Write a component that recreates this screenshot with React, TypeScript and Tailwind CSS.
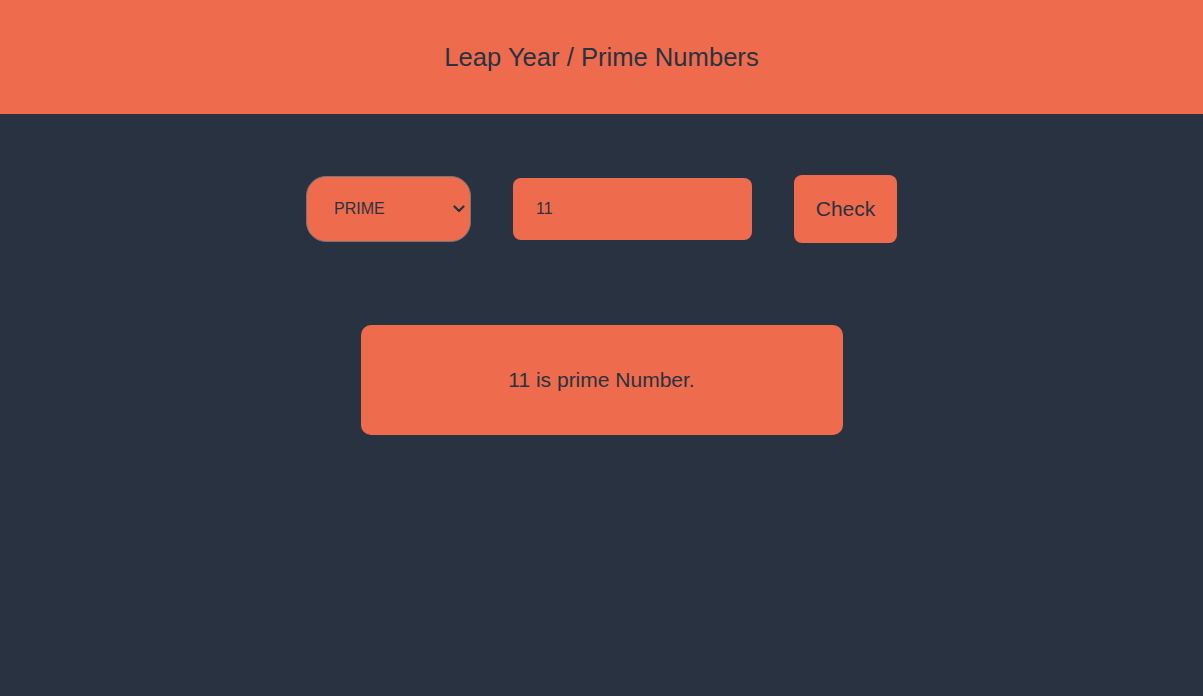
export default function App() {
  return (
    <div className="min-h-[696px] bg-[#293241] font-['Liberation_Sans',Arial,sans-serif] text-[#293241]">
      <header className="flex h-[114px] items-center justify-center bg-[#ee6c4d]">
        <h1 className="text-[25.6px]">Leap Year / Prime Numbers</h1>
      </header>
      <div className="flex items-center justify-center gap-[42px] pt-[61px]">
        <div className="relative">
          <select
            defaultValue="prime"
            className="block h-[66px] w-[165px] appearance-none rounded-[20px] border border-[#767676] bg-[#ee6c4d] pl-[27px] pr-[8px] text-[16px] text-[#293241] outline-none"
          >
            <option value="leap">LEAP</option>
            <option value="prime">PRIME</option>
          </select>
          <svg
            className="pointer-events-none absolute right-[6px] top-[29px] h-[8px] w-[12px]"
            viewBox="0 0 12 8"
            fill="none"
            stroke="#293241"
            strokeWidth={2.2}
            strokeLinecap="round"
            strokeLinejoin="round"
          >
            <path d="M1.5 1.5l4.5 4.5 4.5-4.5" />
          </svg>
        </div>
        <input
          defaultValue="11"
          className="h-[62px] w-[239px] rounded-[8px] bg-[#ee6c4d] px-[23px] text-[16px] text-[#293241] outline-none"
        />
        <button className="h-[68px] w-[103px] rounded-[8px] bg-[#ee6c4d] text-[21px] text-[#293241]">
          Check
        </button>
      </div>
      <div className="flex justify-center pt-[82px]">
        <div className="flex h-[110px] w-[482px] items-center justify-center rounded-[10px] bg-[#ee6c4d] text-[21px]">
          11 is prime Number.
        </div>
      </div>
    </div>
  );
}
